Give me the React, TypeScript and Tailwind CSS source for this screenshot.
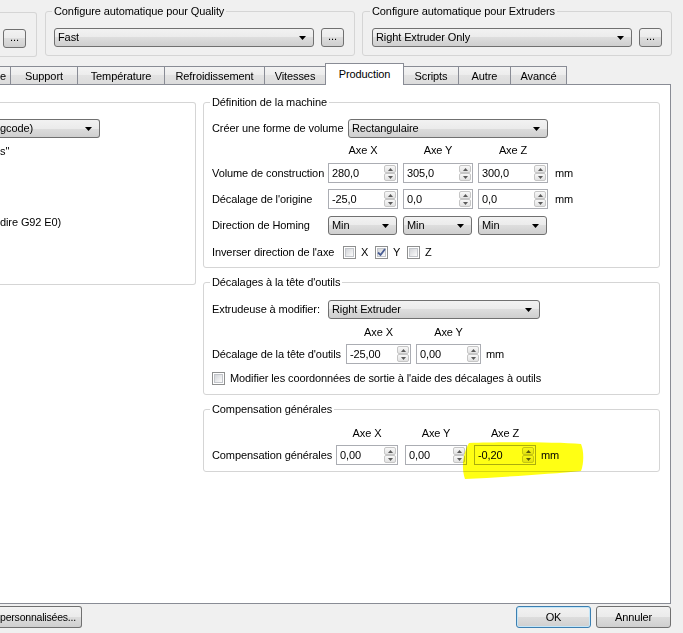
import React from "react";

// Win7 style gradients
const GRAD = "bg-[linear-gradient(#f2f2f2_0%,#ebebeb_50%,#dddddd_50%,#cfcfcf_100%)]";
const TAB_GRAD = "bg-[linear-gradient(#f3f3f3_0%,#ececec_50%,#e2e2e2_50%,#dcdcdc_100%)]";

const Arrow = () => (
  <svg width="7" height="4" viewBox="0 0 7 4" className="shrink-0">
    <polygon points="0,0 7,0 3.5,4" fill="#000" />
  </svg>
);

function Combo({ className = "", children }: { className?: string; children: React.ReactNode }) {
  return (
    <div
      className={`flex h-[19px] items-center justify-between rounded-[3px] border border-[#707070] ${GRAD} pl-[3px] pr-[7px] ${className}`}
    >
      <span className="whitespace-nowrap">{children}</span>
      <Arrow />
    </div>
  );
}

function Dots() {
  return (
    <div className={`flex h-[19px] w-[23px] shrink-0 items-center justify-center rounded-[3px] border border-[#707070] ${GRAD} pb-[3px]`}>
      ...
    </div>
  );
}

function SpinBtn({ up = false }: { up?: boolean }) {
  return (
    <div className="flex flex-1 items-center justify-center rounded-[2px] border border-[#c6c6c6] bg-[linear-gradient(#f8f8f8,#e2e2e2)]">
      <svg width="5" height="3" viewBox="0 0 5 3">
        <polygon points={up ? "0,3 5,3 2.5,0" : "0,0 5,0 2.5,3"} fill="#5a5a5a" />
      </svg>
    </div>
  );
}

function Spin({ value, className = "" }: { value: string; className?: string }) {
  return (
    <div className={`flex h-[20px] shrink-0 border border-[#abadb3] bg-white ${className}`}>
      <div className="flex flex-1 items-center pl-[3px]">{value}</div>
      <div className="flex w-[13px] flex-col py-[1px] pr-[1px]">
        <SpinBtn up />
        <SpinBtn />
      </div>
    </div>
  );
}

function Check({ checked = false }: { checked?: boolean }) {
  return (
    <div className="h-[13px] w-[13px] shrink-0 border border-[#8e8f8f] bg-white p-[1px]">
      <div className="flex h-full w-full items-center justify-center border border-[#c2c5ca] bg-[linear-gradient(135deg,#d3d5d9,#fbfbfb)]">
        {checked && (
          <svg width="9" height="9" viewBox="0 0 9 9" className="overflow-visible">
            <path d="M1,4.5 L3.5,7 L8,1" fill="none" stroke="#4a5e94" strokeWidth="1.8" />
          </svg>
        )}
      </div>
    </div>
  );
}

function Tab({
  label,
  className = "",
  active = false,
  last = false,
  noLeft = false,
}: {
  label: string;
  className?: string;
  active?: boolean;
  last?: boolean;
  noLeft?: boolean;
}) {
  if (active) {
    return (
      <div
        className={`relative z-10 -mb-px flex h-[22px] items-center justify-center border border-b-0 border-[#898c95] bg-white pb-[1px] ${className}`}
      >
        {label}
      </div>
    );
  }
  return (
    <div
      className={`flex h-[18px] items-center justify-center border-t border-[#898c95] pt-[1px] ${noLeft ? "" : "border-l"} ${last ? "border-r" : ""} ${TAB_GRAD} ${className}`}
    >
      {label}
    </div>
  );
}

const AxisHead = ({ className = "", children }: { className?: string; children: React.ReactNode }) => (
  <div className={`shrink-0 text-center ${className}`}>{children}</div>
);

export default function App() {
  return (
    <div className="relative h-[633px] w-[683px] overflow-hidden bg-[#f0f0f0] font-['Liberation_Sans',Arial,sans-serif] text-[11px] leading-[13px] tracking-[-0.1px] text-black">
      {/* top group boxes */}
      <div className="flex h-[56px] items-start">
        <div className="mt-[12px] h-[45px] w-[37px] rounded-r-[3px] border border-l-0 border-[#d5d5d5] pl-[3px] pt-[16px]">
          <Dots />
        </div>
        <fieldset className="ml-[8px] mt-[5px] h-[51px] w-[310px] rounded-[3px] border border-[#d5d5d5] px-[8px] pt-[10px]">
          <legend className="-ml-[2px] px-[2px]">Configure automatique pour Quality</legend>
          <div className="flex gap-[7px]">
            <Combo className="w-[260px]">Fast</Combo>
            <Dots />
          </div>
        </fieldset>
        <fieldset className="ml-[7px] mt-[5px] h-[51px] w-[310px] rounded-[3px] border border-[#d5d5d5] pl-[9px] pr-[8px] pt-[10px]">
          <legend className="-ml-[2px] px-[2px]">Configure automatique pour Extruders</legend>
          <div className="flex gap-[7px]">
            <Combo className="w-[260px]">Right Extruder Only</Combo>
            <Dots />
          </div>
        </fieldset>
      </div>

      {/* tabs */}
      <div className="mt-[7px] flex h-[21px] items-end">
        <div className={`flex h-[18px] w-[10px] items-center justify-end border-t border-[#898c95] pr-[4px] pt-[1px] ${TAB_GRAD}`}>e</div>
        <Tab label="Support" className="w-[67px]" />
        <Tab label="Température" className="w-[87px]" />
        <Tab label="Refroidissement" className="w-[100px]" />
        <Tab label="Vitesses" className="w-[61px]" />
        <Tab label="Production" className="w-[79px]" active />
        <Tab label="Scripts" className="w-[54px]" noLeft />
        <Tab label="Autre" className="w-[52px]" />
        <Tab label="Avancé" className="w-[57px]" last />
      </div>

      {/* tab panel */}
      <div className="flex h-[520px] w-[671px] items-start border border-l-0 border-[#898c95] bg-white">
        {/* left group (clipped) */}
        <div className="mt-[17px] h-[183px] w-[196px] shrink-0 rounded-r-[3px] border border-l-0 border-[#d5d5d5] pt-[16px]">
          <div className={`flex h-[19px] w-[100px] items-center justify-between rounded-r-[3px] border border-l-0 border-[#707070] ${GRAD} pr-[7px]`}>
            <span>gcode)</span>
            <Arrow />
          </div>
          <div className="mt-[7px]">s"</div>
          <div className="mt-[58px]">dire G92 E0)</div>
        </div>

        {/* right column */}
        <div className="ml-[7px] flex w-[457px] shrink-0 flex-col">
          <fieldset className="mt-[11px] w-[457px] rounded-[3px] border border-[#d5d5d5] px-[8px] pb-[8px] pt-[10px]">
            <legend className="-ml-[2px] px-[2px]">Définition de la machine</legend>
            <div className="flex h-[19px] items-center">
              <div className="w-[136px] shrink-0">Créer une forme de volume</div>
              <Combo className="w-[200px]">Rectangulaire</Combo>
            </div>
            <div className="mt-[6px] flex h-[13px] pl-[116px]">
              <AxisHead className="w-[70px]">Axe X</AxisHead>
              <AxisHead className="ml-[5px] w-[70px]">Axe Y</AxisHead>
              <AxisHead className="ml-[5px] w-[70px]">Axe Z</AxisHead>
            </div>
            <div className="mt-[6px] flex h-[20px] items-center">
              <div className="w-[116px] shrink-0">Volume de construction</div>
              <Spin value="280,0" className="w-[70px]" />
              <Spin value="305,0" className="ml-[5px] w-[70px]" />
              <Spin value="300,0" className="ml-[5px] w-[70px]" />
              <span className="ml-[7px]">mm</span>
            </div>
            <div className="mt-[6px] flex h-[20px] items-center">
              <div className="w-[116px] shrink-0">Décalage de l'origine</div>
              <Spin value="-25,0" className="w-[70px]" />
              <Spin value="0,0" className="ml-[5px] w-[70px]" />
              <Spin value="0,0" className="ml-[5px] w-[70px]" />
              <span className="ml-[7px]">mm</span>
            </div>
            <div className="mt-[7px] flex h-[19px] items-center">
              <div className="w-[116px] shrink-0">Direction de Homing</div>
              <Combo className="w-[69px]">Min</Combo>
              <Combo className="ml-[6px] w-[69px]">Min</Combo>
              <Combo className="ml-[6px] w-[69px]">Min</Combo>
            </div>
            <div className="mt-[11px] flex h-[13px] items-center">
              <div className="w-[131px] shrink-0">Inverser direction de l'axe</div>
              {[
                ["X", false],
                ["Y", true],
                ["Z", false],
              ].map(([l, c]) => (
                <div key={l as string} className="flex w-[32px] items-center">
                  <Check checked={c as boolean} />
                  <span className="ml-[5px]">{l as string}</span>
                </div>
              ))}
            </div>
          </fieldset>

          <fieldset className="mt-[8px] w-[457px] rounded-[3px] border border-[#d5d5d5] px-[8px] pb-[9px] pt-[11px]">
            <legend className="-ml-[2px] px-[2px]">Décalages à la tête d'outils</legend>
            <div className="flex h-[19px] items-center">
              <div className="w-[116px] shrink-0">Extrudeuse à modifier:</div>
              <Combo className="w-[212px]">Right Extruder</Combo>
            </div>
            <div className="mt-[7px] flex h-[13px] pl-[134px]">
              <AxisHead className="w-[65px]">Axe X</AxisHead>
              <AxisHead className="ml-[5px] w-[65px]">Axe Y</AxisHead>
            </div>
            <div className="mt-[5px] flex h-[20px] items-center">
              <div className="w-[134px] shrink-0 whitespace-nowrap">Décalage de la tête d'outils</div>
              <Spin value="-25,00" className="w-[65px]" />
              <Spin value="0,00" className="ml-[5px] w-[65px]" />
              <span className="ml-[5px]">mm</span>
            </div>
            <div className="mt-[8px] flex h-[13px] items-center">
              <Check />
              <span className="ml-[5px]">Modifier les coordonnées de sortie à l'aide des décalages à outils</span>
            </div>
          </fieldset>

          <fieldset className="mt-[8px] w-[457px] rounded-[3px] border border-[#d5d5d5] px-[8px] pb-[6px] pt-[11px]">
            <legend className="-ml-[2px] px-[2px]">Compensation générales</legend>
            <div className="flex h-[13px] pl-[124px]">
              <AxisHead className="w-[62px]">Axe X</AxisHead>
              <AxisHead className="ml-[7px] w-[62px]">Axe Y</AxisHead>
              <AxisHead className="ml-[7px] w-[62px]">Axe Z</AxisHead>
            </div>
            <div className="mt-[5px] flex h-[20px] items-center">
              <div className="w-[124px] shrink-0 whitespace-nowrap">Compensation générales</div>
              <Spin value="0,00" className="w-[62px]" />
              <Spin value="0,00" className="ml-[7px] w-[62px]" />
              <Spin value="-0,20" className="ml-[7px] w-[62px]" />
              <span className="ml-[5px]">mm</span>
            </div>
          </fieldset>
        </div>
      </div>

      {/* dialog buttons */}
      <div className="mt-[2px] flex h-[22px]">
        <div className={`flex w-[82px] items-center whitespace-nowrap rounded-r-[3px] border border-l-0 border-[#707070] ${GRAD} pl-0 text-[10.5px] tracking-[-0.2px]`}>
          personnalisées...
        </div>
        <div className={`ml-auto flex w-[75px] items-center justify-center rounded-[3px] border border-[#3c7fb1] ${GRAD} shadow-[inset_0_0_0_1px_#c4e6f8]`}>
          OK
        </div>
        <div className={`ml-[5px] mr-[12px] flex w-[75px] items-center justify-center rounded-[3px] border border-[#707070] ${GRAD}`}>
          Annuler
        </div>
      </div>

      {/* yellow marker highlight */}
      <svg
        className="pointer-events-none absolute left-[460px] top-[440px] mix-blend-multiply"
        width="128"
        height="41"
        viewBox="0 0 128 41"
      >
        <path
          d="M9,3 C40,2 95,2 121,4 C124,11 124,23 121,31 C92,34 42,37 5,39 C1,28 3,13 9,3 Z"
          fill="#ffff14"
        />
      </svg>
    </div>
  );
}
